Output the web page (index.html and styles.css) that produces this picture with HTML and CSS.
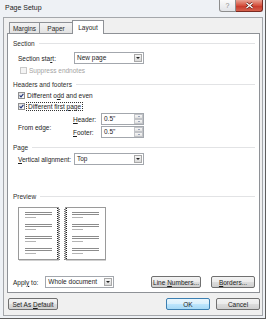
FILE: index.html
```html
<!DOCTYPE html>
<html lang="en">

<head>
    <meta charset="utf-8">
    <meta name="viewport" content="width=device-width, initial-scale=1.0">
    <title>Page Setup</title>
    <link rel="stylesheet" href="styles.css">
</head>

<body>

    <div class="window">
        <div class="titlebar">
            <span class="title">Page Setup</span>
            <div class="captionBtns">
                <span class="helpBtn">?</span>
                <span class="closeBtn">
                    <svg width="9" height="7" viewBox="0 0 9 7">
                        <path d="M1.5 1 L7.5 6 M7.5 1 L1.5 6" stroke="#5a1a12" stroke-width="2.6" />
                        <path d="M1.5 1 L7.5 6 M7.5 1 L1.5 6" stroke="#fff" stroke-width="1.4" />
                    </svg>
                </span>
            </div>
        </div>

        <div class="client">
            <div class="tabs">
                <span class="tab tabMargins">Margins</span>
                <span class="tab tabPaper">Paper</span>
                <span class="tab tabLayout active">Layout</span>
            </div>

            <div class="panel">
                <div class="groupTitle first">Section</div>

                <div class="row indent rowStart">
                    <span class="label">Section sta<u>r</u>t:</span>
                    <div class="combo">
                        <span class="value">New page</span>
                        <span class="arrow"><i></i></span>
                    </div>
                </div>

                <div class="row checkRow disabled rowSuppress">
                    <span class="check"></span>
                    <span>Suppress endnotes</span>
                </div>

                <div class="groupTitle headers">Headers and footers</div>

                <div class="row checkRow rowOdd">
                    <span class="check">
                        <svg width="5" height="5" viewBox="0 0 5 5"><path d="M0.6 2.4 L2 3.9 L4.4 0.9" stroke="#21357a" stroke-width="1.1" fill="none" /></svg>
                    </span>
                    <span>Different o<u>d</u>d and even</span>
                </div>

                <div class="row checkRow rowFirst">
                    <span class="check">
                        <svg width="5" height="5" viewBox="0 0 5 5"><path d="M0.6 2.4 L2 3.9 L4.4 0.9" stroke="#21357a" stroke-width="1.1" fill="none" /></svg>
                    </span>
                    <span class="focus">Different first <u>p</u>age</span>
                </div>

                <div class="edgeBlock indent">
                    <span class="label">From edge:</span>
                    <div class="spins">
                        <span class="spinLabel"><u>H</u>eader:</span>
                        <div class="spin">
                            <span class="value">0.5"</span>
                            <span class="spinBtns"><i class="up"></i><i class="down"></i></span>
                        </div>
                        <span class="spinLabel"><u>F</u>ooter:</span>
                        <div class="spin">
                            <span class="value">0.5"</span>
                            <span class="spinBtns"><i class="up"></i><i class="down"></i></span>
                        </div>
                    </div>
                </div>

                <div class="groupTitle page">Page</div>

                <div class="row indent rowVertical">
                    <span class="label"><u>V</u>ertical alignment:</span>
                    <div class="combo">
                        <span class="value">Top</span>
                        <span class="arrow"><i></i></span>
                    </div>
                </div>

                <div class="groupTitle preview">Preview</div>

                <div class="previewPages">
                    <svg width="88" height="54" viewBox="0 0 88 54">
                        <rect x="0.5" y="0.5" width="40" height="52" fill="#fff" stroke="#9a9a9a" />
                        <rect x="47.5" y="0.5" width="40" height="52" fill="#fff" stroke="#9a9a9a" />
                        <line x1="1" y1="53.5" x2="41" y2="53.5" stroke="#d0d0d0" />
                        <line x1="48" y1="53.5" x2="88" y2="53.5" stroke="#d0d0d0" />
                        <line x1="39.5" y1="1" x2="39.5" y2="53" stroke="#222" stroke-dasharray="1 1" />
                        <line x1="41.5" y1="1" x2="41.5" y2="53" stroke="#777" stroke-dasharray="1 1" stroke-dashoffset="1" />
                        <line x1="46.5" y1="1" x2="46.5" y2="53" stroke="#777" stroke-dasharray="1 1" stroke-dashoffset="1" />
                        <line x1="48.5" y1="1" x2="48.5" y2="53" stroke="#222" stroke-dasharray="1 1" />
                        <g stroke="#8c8c8c">
                            <path d="M7 5.5h27M7 7.5h27M7 17.5h27M7 19.5h27M7 29.5h27M7 31.5h27M7 41.5h27M7 43.5h27" />
                            <path d="M54 5.5h27M54 7.5h27M54 17.5h27M54 19.5h27M54 29.5h27M54 31.5h27M54 41.5h27M54 43.5h27" />
                        </g>
                        <g stroke="#b4b4b4">
                            <path d="M7 10.5h11M7 22.5h11M7 34.5h11M7 46.5h11" />
                            <path d="M54 10.5h11M54 22.5h11M54 34.5h11M54 46.5h11" />
                        </g>
                    </svg>
                </div>

                <div class="row applyRow">
                    <span class="applyLabel">Appl<u>y</u> to:</span>
                    <div class="combo wide">
                        <span class="value">Whole document</span>
                        <span class="arrow"><i></i></span>
                    </div>
                    <span class="btn lineNumbers"><span>Line <u>N</u>umbers...</span></span>
                    <span class="btn borders"><span><u>B</u>orders...</span></span>
                </div>
            </div>

            <div class="footer">
                <span class="btn setDefault"><span>Set As <u>D</u>efault</span></span>
                <span class="btn okBtn">OK</span>
                <span class="btn cancelBtn">Cancel</span>
            </div>
        </div>
    </div>

</body>

</html>
```

FILE: styles.css
```css
* {
    box-sizing: border-box;
}

body {
    margin: 0;
    background-color: #ffffff;
    font-family: "Liberation Sans", Arial, sans-serif;
    font-size: 6.5px;
    color: #1c1c1c;
}

.window {
    width: 266px;
    height: 319px;
    padding: 0 2px 2px 3px;
    background-color: #eef1f5;
    border-right: 1px solid #5e5e5e;
    border-bottom: 1px solid #5e5e5e;
    display: flex;
    flex-direction: column;
}

/* title bar */

.titlebar {
    height: 17px;
    display: flex;
    justify-content: space-between;
    align-items: flex-start;
}

.title {
    margin: 4px 0 0 2px;
    font-size: 7px;
    color: #222;
}

.captionBtns {
    display: flex;
}

.helpBtn {
    width: 17px;
    height: 12px;
    border: 1px solid #8d8d8d;
    border-top: none;
    border-radius: 0 0 0 3px;
    background: linear-gradient(#fbfbfb, #e2e4e8);
    color: #8a8a8a;
    display: flex;
    justify-content: center;
    align-items: center;
    font-size: 7px;
}

.closeBtn {
    width: 27px;
    height: 12px;
    border: 1px solid #7a2a22;
    border-top: none;
    border-left: none;
    border-radius: 0 0 3px 0;
    background: linear-gradient(#e8a293 0%, #d6513e 50%, #c7372a 51%, #d5614d 100%);
    display: flex;
    justify-content: center;
    align-items: center;
}

/* client area */

.client {
    flex: 1;
    border: 1px solid #a4a7ab;
    background-color: #f0f0f0;
    display: flex;
    flex-direction: column;
}

.tabs {
    height: 13px;
    margin: 2px 0 0 5px;
    display: flex;
    align-items: flex-end;
}

.tab {
    height: 11px;
    border: 1px solid #8e9196;
    border-bottom: none;
    background: linear-gradient(#f3f3f3, #e2e2e2);
    display: flex;
    justify-content: center;
    align-items: center;
    color: #2a2a2a;
}

.tabMargins {
    width: 31px;
}

.tabPaper {
    width: 34px;
    margin-left: -1px;
}

.tabLayout {
    width: 32px;
    margin-left: -1px;
}

.tab.active {
    height: 14px;
    margin-bottom: -1px;
    background: #fff;
    position: relative;
    z-index: 1;
}

.panel {
    height: 260px;
    margin: 0 2px 0 3px;
    padding: 0 4px 0 5px;
    border: 1px solid #8e9196;
    background-color: #fff;
    display: flex;
    flex-direction: column;
}

.groupTitle {
    height: 10px;
    display: flex;
    align-items: center;
    gap: 4px;
    color: #2d2d2d;
}

.groupTitle::after {
    content: "";
    flex: 1;
    height: 1px;
    background-color: #e2e3e5;
}

.groupTitle.first {
    margin-top: 4px;
}

.groupTitle.headers {
    margin-top: 4px;
}

.groupTitle.page {
    margin-top: 4px;
}

.groupTitle.preview {
    margin-top: 26px;
}

.row {
    display: flex;
    align-items: center;
}

.indent {
    padding-left: 5px;
}

.label {
    width: 56px;
}

.rowStart {
    height: 12px;
    margin-top: 4px;
}

.rowVertical {
    height: 12px;
    margin-top: 1px;
}

/* checkboxes */

.checkRow {
    height: 10px;
    margin-top: 1px;
    padding-left: 5px;
    gap: 2px;
}

.rowSuppress {
    padding-left: 7px;
}

.check {
    width: 7px;
    height: 7px;
    border: 1px solid #8f8f8f;
    background: linear-gradient(135deg, #dcdcdc, #ffffff);
    display: flex;
    justify-content: center;
    align-items: center;
}

.disabled {
    color: #a3a3a3;
}

.disabled .check {
    border-color: #c9c9c9;
    background: #f4f4f4;
}

.focus {
    outline: 1px dotted #333;
    padding: 0 1px;
}

/* combo boxes */

.combo {
    width: 70px;
    height: 12px;
    border: 1px solid #a3a7ad;
    background-color: #fff;
    display: flex;
}

.combo.wide {
    width: 69px;
    margin-left: 7px;
}

.combo .value {
    flex: 1;
    padding-left: 2px;
    line-height: 10px;
}

.combo .arrow {
    width: 8px;
    margin: 1px;
    border: 1px solid #a9a9a9;
    background: linear-gradient(#f5f5f5, #d9d9d9);
    display: flex;
    justify-content: center;
    align-items: center;
}

.combo .arrow i {
    border-left: 2px solid transparent;
    border-right: 2px solid transparent;
    border-top: 2px solid #222;
}

/* spin boxes */

.edgeBlock {
    height: 25px;
    margin-top: 2px;
    display: flex;
    align-items: center;
}

.edgeBlock .label {
    width: 55px;
    padding-top: 3px;
}

.spins {
    display: grid;
    grid-template-columns: 28px 43px;
    row-gap: 1px;
    align-items: center;
}

.spin {
    height: 12px;
    border: 1px solid #a3a7ad;
    background-color: #fff;
    display: flex;
}

.spin .value {
    flex: 1;
    padding-left: 2px;
    line-height: 10px;
}

.spinBtns {
    width: 9px;
    display: flex;
    flex-direction: column;
}

.spinBtns i {
    flex: 1;
    border: 1px solid #c2c4c8;
    background: linear-gradient(#f7f7f7, #e1e1e1);
    display: flex;
    justify-content: center;
    align-items: center;
}

.spinBtns i::after {
    content: "";
    border-left: 1.5px solid transparent;
    border-right: 1.5px solid transparent;
}

.spinBtns .up::after {
    border-bottom: 1.5px solid #4a5f8c;
}

.spinBtns .down::after {
    border-top: 1.5px solid #4a5f8c;
}

/* preview */

.previewPages {
    height: 54px;
    margin-top: 6px;
    padding-left: 5px;
    display: flex;
}

/* buttons */

.applyRow {
    height: 12px;
    margin-top: 15px;
}

.btn {
    height: 12px;
    border: 1px solid #707070;
    border-radius: 2px;
    background: linear-gradient(#f3f3f3 0%, #ebebeb 50%, #dddddd 51%, #cfcfcf 100%);
    display: flex;
    justify-content: center;
    align-items: center;
    color: #1c1c1c;
}

.lineNumbers {
    width: 50px;
    margin-left: auto;
}

.borders {
    width: 44px;
    margin-left: 10px;
}

.footer {
    margin-top: 5px;
    padding: 0 2px 0 4px;
    display: flex;
}

.setDefault {
    width: 50px;
}

.okBtn {
    width: 44px;
    margin-left: auto;
    border-color: #3c7fb1;
    background: linear-gradient(#eaf6fd 0%, #d9f0fc 50%, #bee6fd 51%, #a7d9f5 100%);
}

.cancelBtn {
    width: 44px;
    margin-left: 6px;
}
```
